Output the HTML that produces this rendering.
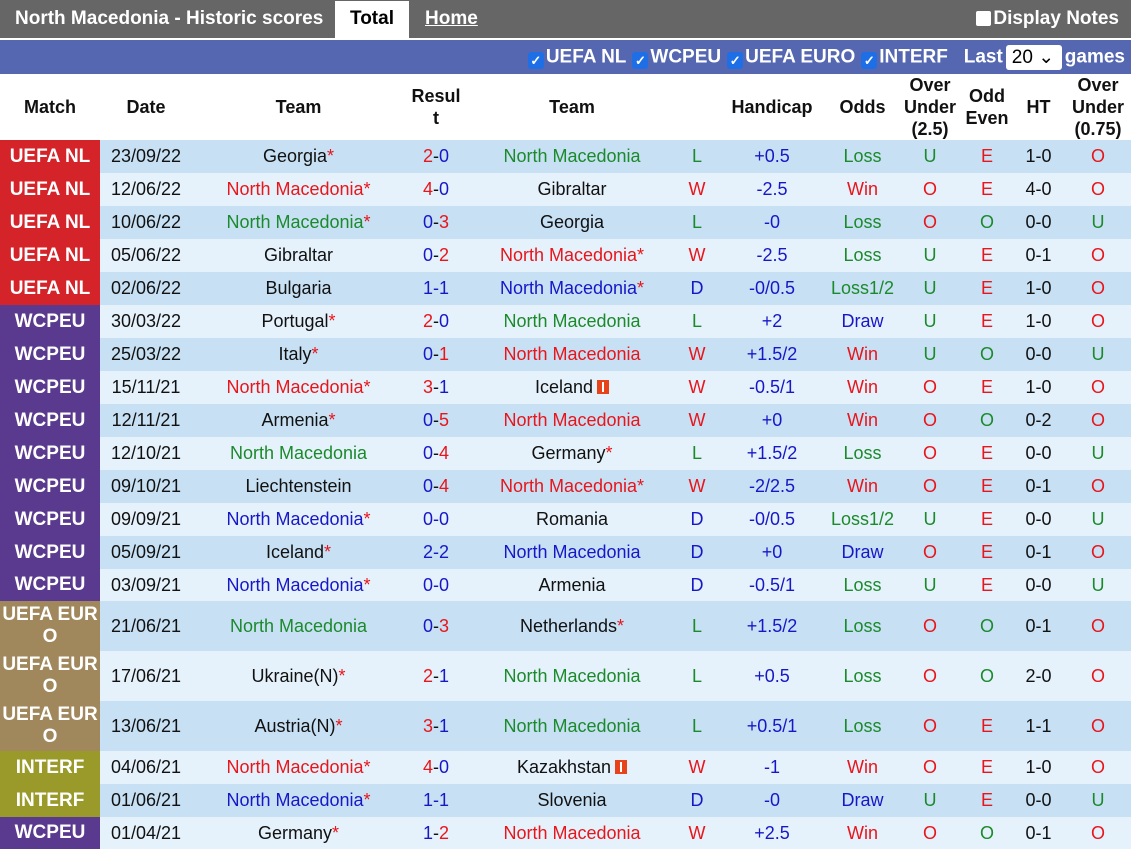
<!DOCTYPE html>
<html><head><meta charset="utf-8"><style>
*{margin:0;padding:0;box-sizing:border-box}
body{width:1131px;height:847px;overflow:hidden;background:#fff;font-family:"Liberation Sans",Arial,sans-serif;font-size:18px;color:#111}
.top{height:38px;background:#666;position:relative;color:#fff;font-weight:bold;font-size:19px}
.top .t{position:absolute;left:15px;top:8px}
.tab1{position:absolute;left:335px;top:1px;width:74px;height:37px;background:#fff;color:#000;text-align:center;line-height:36px}
.tab2{position:absolute;left:425px;top:8px;text-decoration:underline}
.dn{position:absolute;right:12px;top:8px}
.dn i{display:inline-block;width:15px;height:15px;background:#fff;border-radius:2px;vertical-align:-2px;margin-right:2px}
.sep{height:2px;background:#fff}
.flt{height:34px;background:#5567b1;color:#fff;font-weight:bold;font-size:19px;position:relative}
.flt .in{position:absolute;right:6px;top:5px;white-space:nowrap}
.cb{display:inline-block;width:16px;height:17px;background:#1e6fe6;border-radius:3px;vertical-align:-2px;color:#fff;font-size:13px;text-align:center;line-height:17px;margin:0 2px 0 6px}
.sel{display:inline-block;width:56px;height:25px;background:#fff;color:#000;font-weight:normal;border-radius:3px;vertical-align:middle;padding-left:6px;line-height:25px;margin:0 3px}
table{border-collapse:collapse;table-layout:fixed;width:1131px}
th{font-weight:bold;font-size:18px;height:66px;line-height:22px;text-align:center;background:#fff}
td{text-align:center;white-space:nowrap;padding:0;overflow:hidden}
tr.ra td{background:#c7e0f4}tr.rb td{background:#e6f2fb}
td.m{color:#fff;font-weight:bold;font-size:19px;line-height:22px;white-space:normal}
tr td.nl{background:#d5232a}tr td.wc{background:#5a3a8e}tr td.eu{background:#a0885c}tr td.it{background:#9a9a2a}
.g{color:#1b8a2b}.r{color:#e8151b}.b{color:#1717c8}.s{color:#e8151b}
.rc{display:inline-block;width:12px;height:14px;background:#e8421a;vertical-align:-1px;margin-left:4px;position:relative}
.rc:after{content:"";position:absolute;left:5px;top:2px;width:2px;height:10px;background:#fff}
</style></head><body>
<div class="top"><span class="t">North Macedonia - Historic scores</span><span class="tab1">Total</span><span class="tab2">Home</span><span class="dn"><i></i>Display Notes</span></div>
<div class="sep"></div>
<div class="flt"><div class="in"><span class="cb">✓</span>UEFA NL<span class="cb">✓</span>WCPEU<span class="cb">✓</span>UEFA EURO<span class="cb">✓</span>INTERF &nbsp; Last<span class="sel">20 ⌄</span>games</div></div>
<table>
<colgroup><col style="width:100px"><col style="width:92px"><col style="width:213px"><col style="width:62px"><col style="width:210px"><col style="width:40px"><col style="width:110px"><col style="width:71px"><col style="width:64px"><col style="width:50px"><col style="width:53px"><col style="width:66px"></colgroup>
<tr><th>Match</th><th>Date</th><th>Team</th><th>Resul<br>t</th><th>Team</th><th></th><th>Handicap</th><th>Odds</th><th>Over<br>Under<br>(2.5)</th><th>Odd<br>Even</th><th>HT</th><th>Over<br>Under<br>(0.75)</th></tr>
<tr class="ra" style="height:33px"><td class="m nl">UEFA NL</td><td>23/09/22</td><td>Georgia<span class="s">*</span></td><td><span class="r">2</span>-<span class="b">0</span></td><td class="g">North Macedonia</td><td class="g">L</td><td class="b">+0.5</td><td class="g">Loss</td><td class="g">U</td><td class="r">E</td><td>1-0</td><td class="r">O</td></tr>
<tr class="rb" style="height:33px"><td class="m nl">UEFA NL</td><td>12/06/22</td><td class="r">North Macedonia*</td><td><span class="r">4</span>-<span class="b">0</span></td><td>Gibraltar</td><td class="r">W</td><td class="b">-2.5</td><td class="r">Win</td><td class="r">O</td><td class="r">E</td><td>4-0</td><td class="r">O</td></tr>
<tr class="ra" style="height:33px"><td class="m nl">UEFA NL</td><td>10/06/22</td><td class="g">North Macedonia<span class="s">*</span></td><td><span class="b">0</span>-<span class="r">3</span></td><td>Georgia</td><td class="g">L</td><td class="b">-0</td><td class="g">Loss</td><td class="r">O</td><td class="g">O</td><td>0-0</td><td class="g">U</td></tr>
<tr class="rb" style="height:33px"><td class="m nl">UEFA NL</td><td>05/06/22</td><td>Gibraltar</td><td><span class="b">0</span>-<span class="r">2</span></td><td class="r">North Macedonia*</td><td class="r">W</td><td class="b">-2.5</td><td class="g">Loss</td><td class="g">U</td><td class="r">E</td><td>0-1</td><td class="r">O</td></tr>
<tr class="ra" style="height:33px"><td class="m nl">UEFA NL</td><td>02/06/22</td><td>Bulgaria</td><td class="b">1-1</td><td class="b">North Macedonia<span class="s">*</span></td><td class="b">D</td><td class="b">-0/0.5</td><td class="g">Loss1/2</td><td class="g">U</td><td class="r">E</td><td>1-0</td><td class="r">O</td></tr>
<tr class="rb" style="height:33px"><td class="m wc">WCPEU</td><td>30/03/22</td><td>Portugal<span class="s">*</span></td><td><span class="r">2</span>-<span class="b">0</span></td><td class="g">North Macedonia</td><td class="g">L</td><td class="b">+2</td><td class="b">Draw</td><td class="g">U</td><td class="r">E</td><td>1-0</td><td class="r">O</td></tr>
<tr class="ra" style="height:33px"><td class="m wc">WCPEU</td><td>25/03/22</td><td>Italy<span class="s">*</span></td><td><span class="b">0</span>-<span class="r">1</span></td><td class="r">North Macedonia</td><td class="r">W</td><td class="b">+1.5/2</td><td class="r">Win</td><td class="g">U</td><td class="g">O</td><td>0-0</td><td class="g">U</td></tr>
<tr class="rb" style="height:33px"><td class="m wc">WCPEU</td><td>15/11/21</td><td class="r">North Macedonia*</td><td><span class="r">3</span>-<span class="b">1</span></td><td>Iceland<span class="rc"></span></td><td class="r">W</td><td class="b">-0.5/1</td><td class="r">Win</td><td class="r">O</td><td class="r">E</td><td>1-0</td><td class="r">O</td></tr>
<tr class="ra" style="height:33px"><td class="m wc">WCPEU</td><td>12/11/21</td><td>Armenia<span class="s">*</span></td><td><span class="b">0</span>-<span class="r">5</span></td><td class="r">North Macedonia</td><td class="r">W</td><td class="b">+0</td><td class="r">Win</td><td class="r">O</td><td class="g">O</td><td>0-2</td><td class="r">O</td></tr>
<tr class="rb" style="height:33px"><td class="m wc">WCPEU</td><td>12/10/21</td><td class="g">North Macedonia</td><td><span class="b">0</span>-<span class="r">4</span></td><td>Germany<span class="s">*</span></td><td class="g">L</td><td class="b">+1.5/2</td><td class="g">Loss</td><td class="r">O</td><td class="r">E</td><td>0-0</td><td class="g">U</td></tr>
<tr class="ra" style="height:33px"><td class="m wc">WCPEU</td><td>09/10/21</td><td>Liechtenstein</td><td><span class="b">0</span>-<span class="r">4</span></td><td class="r">North Macedonia*</td><td class="r">W</td><td class="b">-2/2.5</td><td class="r">Win</td><td class="r">O</td><td class="r">E</td><td>0-1</td><td class="r">O</td></tr>
<tr class="rb" style="height:33px"><td class="m wc">WCPEU</td><td>09/09/21</td><td class="b">North Macedonia<span class="s">*</span></td><td class="b">0-0</td><td>Romania</td><td class="b">D</td><td class="b">-0/0.5</td><td class="g">Loss1/2</td><td class="g">U</td><td class="r">E</td><td>0-0</td><td class="g">U</td></tr>
<tr class="ra" style="height:33px"><td class="m wc">WCPEU</td><td>05/09/21</td><td>Iceland<span class="s">*</span></td><td class="b">2-2</td><td class="b">North Macedonia</td><td class="b">D</td><td class="b">+0</td><td class="b">Draw</td><td class="r">O</td><td class="r">E</td><td>0-1</td><td class="r">O</td></tr>
<tr class="rb" style="height:32px"><td class="m wc">WCPEU</td><td>03/09/21</td><td class="b">North Macedonia<span class="s">*</span></td><td class="b">0-0</td><td>Armenia</td><td class="b">D</td><td class="b">-0.5/1</td><td class="g">Loss</td><td class="g">U</td><td class="r">E</td><td>0-0</td><td class="g">U</td></tr>
<tr class="ra" style="height:50px"><td class="m eu">UEFA EUR<br>O</td><td>21/06/21</td><td class="g">North Macedonia</td><td><span class="b">0</span>-<span class="r">3</span></td><td>Netherlands<span class="s">*</span></td><td class="g">L</td><td class="b">+1.5/2</td><td class="g">Loss</td><td class="r">O</td><td class="g">O</td><td>0-1</td><td class="r">O</td></tr>
<tr class="rb" style="height:50px"><td class="m eu">UEFA EUR<br>O</td><td>17/06/21</td><td>Ukraine(N)<span class="s">*</span></td><td><span class="r">2</span>-<span class="b">1</span></td><td class="g">North Macedonia</td><td class="g">L</td><td class="b">+0.5</td><td class="g">Loss</td><td class="r">O</td><td class="g">O</td><td>2-0</td><td class="r">O</td></tr>
<tr class="ra" style="height:50px"><td class="m eu">UEFA EUR<br>O</td><td>13/06/21</td><td>Austria(N)<span class="s">*</span></td><td><span class="r">3</span>-<span class="b">1</span></td><td class="g">North Macedonia</td><td class="g">L</td><td class="b">+0.5/1</td><td class="g">Loss</td><td class="r">O</td><td class="r">E</td><td>1-1</td><td class="r">O</td></tr>
<tr class="rb" style="height:33px"><td class="m it">INTERF</td><td>04/06/21</td><td class="r">North Macedonia*</td><td><span class="r">4</span>-<span class="b">0</span></td><td>Kazakhstan<span class="rc"></span></td><td class="r">W</td><td class="b">-1</td><td class="r">Win</td><td class="r">O</td><td class="r">E</td><td>1-0</td><td class="r">O</td></tr>
<tr class="ra" style="height:33px"><td class="m it">INTERF</td><td>01/06/21</td><td class="b">North Macedonia<span class="s">*</span></td><td class="b">1-1</td><td>Slovenia</td><td class="b">D</td><td class="b">-0</td><td class="b">Draw</td><td class="g">U</td><td class="r">E</td><td>0-0</td><td class="g">U</td></tr>
<tr class="rb" style="height:32px"><td class="m wc">WCPEU</td><td>01/04/21</td><td>Germany<span class="s">*</span></td><td><span class="b">1</span>-<span class="r">2</span></td><td class="r">North Macedonia</td><td class="r">W</td><td class="b">+2.5</td><td class="r">Win</td><td class="r">O</td><td class="g">O</td><td>0-1</td><td class="r">O</td></tr>
</table>
</body></html>
